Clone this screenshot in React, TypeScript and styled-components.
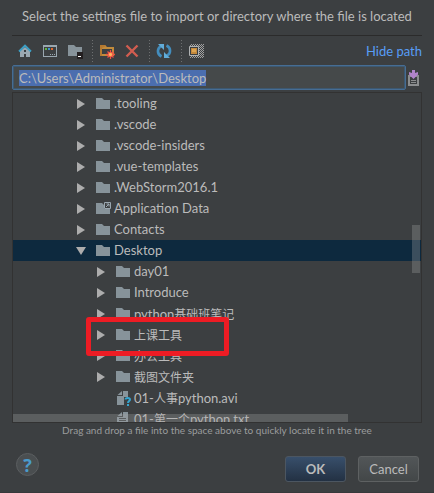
import React, { useEffect, useRef } from "react";
import styled, { createGlobalStyle, css } from "styled-components";

const GlobalStyle = createGlobalStyle`
  *, *::before, *::after { box-sizing: border-box; }
  body {
    margin: 0;
    background: #3c3f41;
    color: #bbbbbb;
    font-family: Lato, "Noto Sans CJK SC", sans-serif;
    font-size: 13px;
  }
  button, input { font: inherit; color: inherit; }
  svg { display: block; flex: none; }
`;

const Dialog = styled.main`
  display: flex;
  flex-direction: column;
  height: 100vh;
  min-height: 320px;
  padding: 0 12px;
  border-bottom: 1px solid #37393b;
`;

const Title = styled.h1`
  margin: 0;
  padding: 6px 0 8px;
  font-size: 13px;
  font-weight: 400;
  line-height: 21px;
  text-align: center;
  white-space: nowrap;
  border-bottom: 1px solid #2b2b2b;
`;

const Toolbar = styled.div`
  display: flex;
  align-items: center;
  height: 29px;
  padding-left: 5px;
`;

const ToolButton = styled.button`
  display: flex;
  padding: 0;
  margin-right: 9px;
  border: 0;
  background: none;
`;

const Separator = styled.span`
  width: 1px;
  height: 22px;
  margin-right: 6px;
  background: repeating-linear-gradient(#6d6f70 0 1px, transparent 1px 3px);
`;

const PathLink = styled.a`
  margin-left: auto;
  color: #589df6;
  text-decoration: none;
  white-space: nowrap;
`;

const PathRow = styled.div`
  display: flex;
  align-items: center;
  gap: 1px;
  margin-bottom: 2px;
  padding-right: 2px;
`;

const PathInput = styled.input`
  flex: 1;
  min-width: 0;
  height: 25px;
  padding: 0 6px;
  border: 1px solid #466d94;
  border-radius: 2px;
  outline: 0;
  background: #45494a;
  box-shadow: inset 0 0 0 1px #3d5870;
  &::selection { background: #4b6eaf; color: #bbbbbb; }
`;

const TreePanel = styled.section`
  position: relative;
  flex: 1 1 0;
  min-height: 0;
  overflow: hidden;
  border: 1px solid #323232;
`;

const TreeList = styled.ul`
  margin: 0;
  padding: 0;
  list-style: none;
`;

const TreeRow = styled.li<{ $nested?: boolean; $selected?: boolean }>`
  position: relative;
  display: flex;
  align-items: center;
  height: 21px;
  padding-left: ${(p) => (p.$nested ? 83 : 63)}px;
  white-space: nowrap;
  ${(p) => p.$selected && css`background: #0d293e;`}
`;

const Toggle = styled.button`
  display: flex;
  width: 20px;
  padding: 0;
  border: 0;
  background: none;
`;

const ToggleSpace = styled.span`
  width: 20px;
`;

const RowLabel = styled.span`
  margin-left: 2px;
  line-height: 21px;
`;

const HanText = styled.span`
  font-family: "Noto Sans CJK SC", sans-serif;
  font-size: 12px;
`;

const Highlight = styled.span`
  position: absolute;
  z-index: 1;
  top: -7px;
  left: 73px;
  width: 143px;
  height: 39px;
  border: 5px solid #ed1c24;
  border-radius: 3px;
  pointer-events: none;
`;

const VerticalThumb = styled.span`
  position: absolute;
  top: 40%;
  right: 1px;
  width: 8px;
  height: 48px;
  background: rgba(166, 166, 166, 0.3);
`;

const HorizontalThumb = styled.span`
  position: absolute;
  bottom: 0;
  left: 0;
  width: 82%;
  height: 8px;
  background: rgba(166, 166, 166, 0.3);
`;

const Hint = styled.p`
  margin: 0;
  color: #9a9c9d;
  font-size: 10px;
  line-height: 15px;
  text-align: center;
  white-space: nowrap;
`;

const Footer = styled.footer`
  display: flex;
  align-items: flex-end;
  gap: 12px;
  padding: 15px 3px 10px 4px;
`;

const HelpButton = styled.button`
  width: 23px;
  height: 23px;
  margin: 0 auto 6px 0;
  padding: 0;
  border: 1px solid #5b5e60;
  border-radius: 50%;
  background: #4a4e50;
  color: #4a9bcb;
  font-family: "Open Sans", sans-serif;
  font-size: 18px;
  font-weight: 700;
  line-height: 20px;
`;

const ActionButton = styled.button<{ $primary?: boolean }>`
  width: 61px;
  height: 26px;
  padding: 0;
  border: 1px solid #5e6162;
  border-radius: 3px;
  background: linear-gradient(#525658, #434748);
  line-height: 22px;
  ${(p) =>
    p.$primary &&
    css`
      border-color: #4c5661;
      background: linear-gradient(#384f6b, #233143);
      font-weight: 700;
    `}
`;

const HomeIcon = () => (
  <svg width="16" height="16" viewBox="0 0 16 16">
    <path d="M3 8l5-4 5 4v6H9v-3H7v3H3z" fill="#9aa7b0" />
    <path d="M7 7h2v2H7z" fill="#3c3f41" />
    <path d="M2 8.5l6-6 6 6" fill="none" stroke="#3c9fc5" strokeWidth="1.8" />
  </svg>
);
const ProjectIcon = () => (
  <svg width="16" height="16" viewBox="0 0 16 16">
    <path d="M1 2h14v12H1zM2 4v9h12V4z" fill="#9aa7b0" fillRule="evenodd" />
    <path d="M3 5h2v2H3z" fill="#62b543" />
    <path d="M6 5h2v2H6z" fill="#3d94cf" />
    <path d="M9 5h2v2H9z" fill="#e0672c" />
    <path d="M8 11h1v1H8zM10 11h1v1h-1zM12 11h1v1h-1z" fill="#9aa7b0" />
  </svg>
);
const ModuleIcon = () => (
  <svg width="16" height="16" viewBox="0 0 16 16">
    <path d="M1 2h6l2 2h6v9H1z" fill="#87939a" />
    <path d="M10 9h6v7h-6z" fill="#231f20" />
    <path d="M11 13h3v1h-3z" fill="#fff" />
  </svg>
);
const NewFolderIcon = () => (
  <svg width="16" height="16" viewBox="0 0 16 16">
    <path d="M1 2h5l2 2h7v9H1zM3 6v5h10V6z" fill="#c28b3c" fillRule="evenodd" />
    <path d="M1 2h5l1 1-4 2v8H1z" fill="#b57930" />
    <path d="M11.500 7v9M7 11.500h9M8.500 8.500l6 6M14.500 8.500l-6 6" stroke="#f05045" strokeWidth="1.3" />
    <circle cx="11.5" cy="11.5" r="2.2" fill="#ffb45c" stroke="#f05045" />
  </svg>
);
const DeleteIcon = () => (
  <svg width="16" height="16" viewBox="0 0 16 16">
    <path d="M2.500 2.500l11 11M13.500 2.500l-11 11" stroke="#d15d50" strokeWidth="2.400" />
  </svg>
);
const RefreshIcon = () => (
  <svg width="16" height="16" viewBox="0 0 16 16">
    <g fill="none" stroke="#438dbd" strokeWidth="2.600">
      <path d="M5.500 13.500C.5 11 1 5 5.500 3" />
      <path d="M10.500 2.500c5 2.500 4.500 8.500 0 10.500" />
    </g>
    <path d="M2 1h6v6zM8 9v6h6z" fill="#62acd8" />
  </svg>
);
const HiddenIcon = () => (
  <svg width="16" height="16" viewBox="0 0 16 16">
    <defs>
      <pattern id="checker" width="2" height="2" patternUnits="userSpaceOnUse">
        <path d="M0 0h1v1H0zM1 1h1v1H1z" fill="#a0a0a0" />
      </pattern>
    </defs>
    <path d="M2 1h14v14H2z" fill="url(#checker)" />
    <path d="M1.500 3.500h9v9h-9z" fill="#3c3f41" stroke="#b0b2b3" />
    <path d="M3 5h6v6H3z" fill="#c4893c" />
    <path d="M4 6h4v3H4z" fill="#dda552" />
  </svg>
);
const DropFileIcon = () => (
  <svg width="13" height="18" viewBox="0 0 13 18">
    <path d="M1 6h11v11H1zM3 8v7h7V8z" fill="#8b8d8e" fillRule="evenodd" />
    <path d="M4 11h5v1H4zM4 13h5v1H4z" fill="#8b8d8e" />
    <path d="M5 1h3v3l3-1v2.500L6.500 10 2 5.500V3l3 1z" fill="#b083c9" />
  </svg>
);
const Arrow = ({ open }: { open?: boolean }) => (
  <svg width="10" height="10" viewBox="0 0 10 10">
    <path d={open ? "M0 1h10L5 9z" : "M1 0l8 5-8 5z"} fill="#adadad" />
  </svg>
);

type Kind = "folder" | "link" | "unknown" | "text";

const EntryIcon = ({ kind }: { kind: Kind }) => {
  if (kind === "folder" || kind === "link") {
    return (
      <svg width="16" height="14" viewBox="0 0 16 14">
        <path d="M0 1h6l2 2h6v9H0z" fill="#87939a" />
        {kind === "link" && (
          <>
            <path d="M8 0h7v7H8z" fill="#3c3f41" />
            <path d="M8.500.5h6v6h-6zM10 5l3-3M10.500 2H13v2.500" fill="none" stroke="#9aa7b0" />
          </>
        )}
      </svg>
    );
  }
  return (
    <svg width="16" height="16" viewBox="0 0 16 16">
      <path d="M7 1h5v14H1V6h6z" fill="#87939a" />
      <path d="M6 1v4H1.500z" fill="#87939a" />
      {kind === "text" ? (
        <path d="M3 7h7v1H3zM3 9h7v1H3zM3 11h7v1H3z" fill="#3c3f41" />
      ) : (
        <>
          <path d="M8 7h8v9H8z" fill="#3c3f41" />
          <path d="M9.500 9.500c0-2 4.500-2 4.500 0 0 1.500-2 1.500-2 3.500" fill="none" stroke="#35a5cf" strokeWidth="2" />
          <path d="M11 14h2v2h-2z" fill="#35a5cf" />
        </>
      )}
    </svg>
  );
};

interface Entry {
  name: string;
  kind?: Kind;
  nested?: boolean;
  open?: boolean;
  marked?: boolean;
}

const entries: Entry[] = [
  { name: ".tooling" },
  { name: ".vscode" },
  { name: ".vscode-insiders" },
  { name: ".vue-templates" },
  { name: ".WebStorm2016.1" },
  { name: "Application Data", kind: "link" },
  { name: "Contacts" },
  { name: "Desktop", open: true },
  { name: "day01", nested: true },
  { name: "Introduce", nested: true },
  { name: "python基础班笔记", nested: true },
  { name: "上课工具", nested: true, marked: true },
  { name: "办公工具", nested: true },
  { name: "截图文件夹", nested: true },
  { name: "01-人事python.avi", nested: true, kind: "unknown" },
  { name: "01-第一个python.txt", nested: true, kind: "text" },
];

const EntryName = ({ name }: { name: string }) => (
  <RowLabel>
    {name
      .split(/([\u4e00-\u9fff]+)/)
      .filter(Boolean)
      .map((part) => (/[\u4e00-\u9fff]/.test(part) ? <HanText key={part}>{part}</HanText> : part))}
  </RowLabel>
);

const Entries = () => (
  <TreeList role="tree" aria-label="Files">
    {entries.map(({ name, kind = "folder", nested, open, marked }) => (
      <TreeRow key={name} role="treeitem" aria-selected={!!open} $nested={nested} $selected={open}>
        {kind === "folder" || kind === "link" ? (
          <Toggle aria-label={`Toggle ${name}`}>
            <Arrow open={open} />
          </Toggle>
        ) : (
          <ToggleSpace />
        )}
        <EntryIcon kind={kind} />
        <EntryName name={name} />
        {marked && <Highlight />}
      </TreeRow>
    ))}
  </TreeList>
);

export default function App() {
  const pathRef = useRef<HTMLInputElement>(null);

  useEffect(() => {
    pathRef.current?.focus();
    pathRef.current?.select();
  }, []);

  return (
    <>
      <GlobalStyle />
      <Dialog>
        <Title>Select the settings file to import or directory where the file is located</Title>
        <Toolbar role="toolbar">
          <ToolButton aria-label="Home"><HomeIcon /></ToolButton>
          <ToolButton aria-label="Project directory"><ProjectIcon /></ToolButton>
          <ToolButton aria-label="Module directory"><ModuleIcon /></ToolButton>
          <Separator />
          <ToolButton aria-label="New folder"><NewFolderIcon /></ToolButton>
          <ToolButton aria-label="Delete"><DeleteIcon /></ToolButton>
          <Separator />
          <ToolButton aria-label="Refresh"><RefreshIcon /></ToolButton>
          <Separator />
          <ToolButton aria-label="Show hidden files"><HiddenIcon /></ToolButton>
          <PathLink href="#path">Hide path</PathLink>
        </Toolbar>
        <PathRow>
          <PathInput id="path" ref={pathRef} aria-label="Path" defaultValue="C:\Users\Administrator\Desktop" spellCheck={false} />
          <DropFileIcon />
        </PathRow>
        <TreePanel>
          <Entries />
          <VerticalThumb />
          <HorizontalThumb />
        </TreePanel>
        <Hint>Drag and drop a file into the space above to quickly locate it in the tree</Hint>
        <Footer>
          <HelpButton aria-label="Help">?</HelpButton>
          <ActionButton $primary>OK</ActionButton>
          <ActionButton>Cancel</ActionButton>
        </Footer>
      </Dialog>
    </>
  );
}
